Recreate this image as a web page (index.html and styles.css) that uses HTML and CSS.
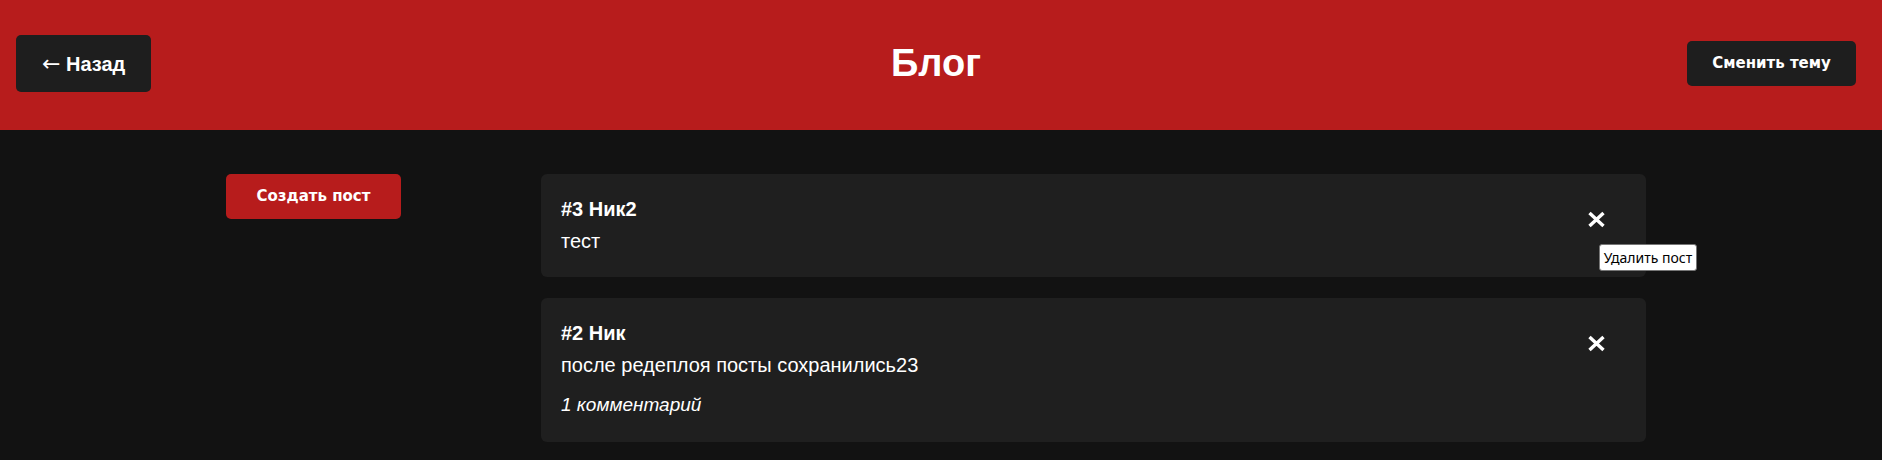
FILE: index.html
```html
<!DOCTYPE html>
<html lang="ru">
<head>
<meta charset="utf-8">
<title>Блог</title>
<link rel="stylesheet" href="styles.css">
</head>
<body>
<header class="topbar">
  <div class="topbar-left"><a class="btn-back" href="#"><span class="arrow">←</span> Назад</a></div>
  <h1 class="title">Блог</h1>
  <div class="topbar-right"><button class="btn-theme">Сменить тему</button></div>
</header>
<main class="layout">
  <aside class="sidebar"><button class="btn-create">Создать пост</button></aside>
  <section class="posts">
    <article class="post">
      <div class="post-body">
        <h3 class="post-title">#3 Ник2</h3>
        <p class="post-text">тест</p>
      </div>
      <button class="post-delete" aria-label="Удалить пост">
        <svg width="19" height="17" viewBox="0 0 19 17"><path d="M2.5 2 L16.5 15 M16.5 2 L2.5 15" stroke="#fff" stroke-width="3.4" fill="none"/></svg>
      </button>
    </article>
    <article class="post">
      <div class="post-body">
        <h3 class="post-title">#2 Ник</h3>
        <p class="post-text">после редеплоя посты сохранились23</p>
        <p class="post-comments">1 комментарий</p>
      </div>
      <button class="post-delete" aria-label="Удалить пост">
        <svg width="19" height="17" viewBox="0 0 19 17"><path d="M2.5 2 L16.5 15 M16.5 2 L2.5 15" stroke="#fff" stroke-width="3.4" fill="none"/></svg>
      </button>
    </article>
  </section>
</main>
<div class="tooltip">Удалить пост</div>
</body>
</html>
```
FILE: styles.css
```css
* { box-sizing: border-box; }
html, body { margin: 0; padding: 0; }
body {
  background: #121212;
  color: #ffffff;
  font-family: "Liberation Sans", Arial, sans-serif;
  height: 460px;
  overflow: hidden;
  position: relative;
}
.topbar {
  background: #b71c1c;
  height: 130px;
  display: grid;
  grid-template-columns: 1fr auto 1fr;
  align-items: center;
  padding: 0 26px 3px 16px;
}
.topbar-left { justify-self: start; }
.topbar-right { justify-self: end; }
.btn-back {
  display: inline-block;
  background: #1e1e1e;
  color: #fff;
  text-decoration: none;
  font-weight: bold;
  font-size: 20px;
  line-height: 25px;
  height: 57px;
  padding: 16px 0 16px 26px;
  width: 135px;
  border-radius: 5px;
  white-space: nowrap;
}
.arrow {
  font-family: "DejaVu Sans", sans-serif;
  font-weight: normal;
  font-size: 22px;
}
.title {
  margin: 0;
  font-size: 38px;
  font-weight: bold;
  color: #fff;
}
.btn-theme, .btn-create {
  border: none;
  color: #fff;
  font-family: "DejaVu Sans", Verdana, sans-serif;
  font-weight: bold;
  font-size: 15px;
  line-height: 17px;
  border-radius: 5px;
  cursor: pointer;
  white-space: nowrap;
}
.btn-theme {
  background: #1e1e1e;
  padding: 14px 0;
  width: 169px;
  height: 45px;
}
.layout {
  display: flex;
  align-items: flex-start;
  padding: 44px 0 0 226px;
  gap: 140px;
}
.sidebar { width: 175px; }
.btn-create {
  background: #b71c1c;
  width: 175px;
  height: 45px;
  padding: 14px 0;
}
.posts {
  width: 1105px;
  display: flex;
  flex-direction: column;
  gap: 21px;
}
.post {
  background: #1f1f1f;
  border-radius: 6px;
  padding: 20px 20px 21px 20px;
  display: flex;
  justify-content: space-between;
  align-items: flex-start;
}
.post-title {
  margin: 0 0 2px 0;
  font-size: 20px;
  line-height: 30px;
  font-weight: bold;
}
.post-text {
  margin: 0;
  font-size: 20px;
  line-height: 30px;
}
.post-comments {
  margin: 10px 0 1px 0;
  font-size: 19px;
  line-height: 30px;
  font-style: italic;
}
.post-delete {
  background: none;
  border: none;
  padding: 0;
  margin: 17px 20px 0 0;
  width: 19px;
  height: 17px;
  display: block;
  cursor: pointer;
}
.post-delete svg { display: block; }
.tooltip {
  position: absolute;
  left: 1599px;
  top: 244px;
  width: 98px;
  height: 27px;
  background: #fff;
  color: #000;
  border: 1px solid #767676;
  border-radius: 3px;
  font-family: "Noto Sans", "Open Sans", sans-serif;
  font-size: 14px;
  line-height: 25px;
  text-align: center;
  white-space: nowrap;
}
```
